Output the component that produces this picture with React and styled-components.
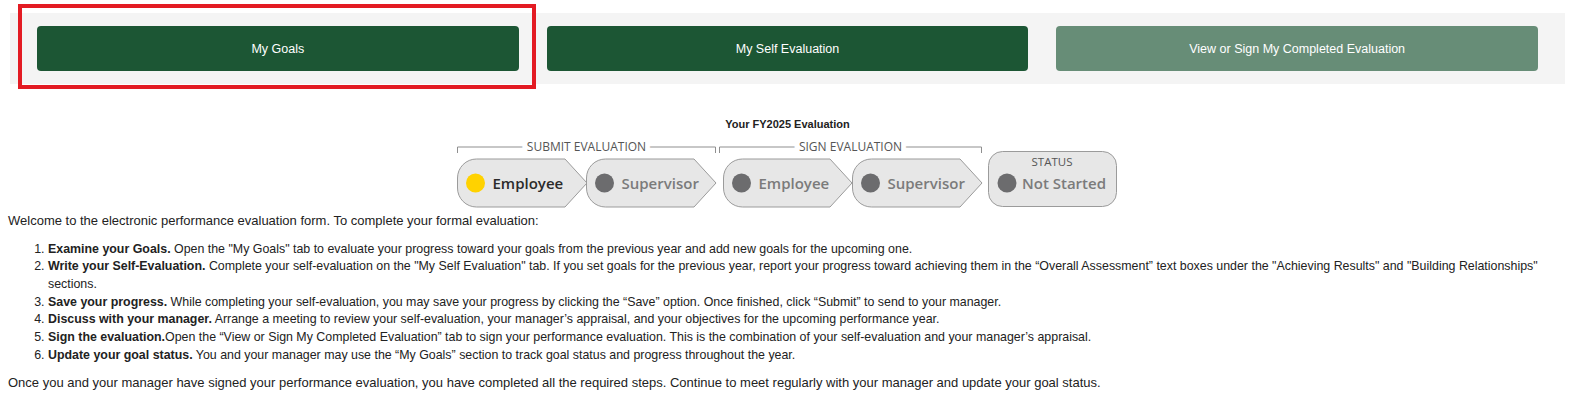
import styled, { createGlobalStyle } from "styled-components";

const GlobalStyle = createGlobalStyle`
  body {
    margin: 0;
    background: #fff;
    font-family: "Liberation Sans", Arial, sans-serif;
    color: #222;
  }
`;

const tabs = [
  { label: "My Goals" },
  { label: "My Self Evaluation" },
  { label: "View or Sign My Completed Evaluation", muted: true },
];

const steps = [
  {
    title: "Examine your Goals.",
    text: ' Open the "My Goals" tab to evaluate your progress toward your goals from the previous year and add new goals for the upcoming one.',
  },
  {
    title: "Write your Self-Evaluation.",
    text: ' Complete your self-evaluation on the "My Self Evaluation" tab. If you set goals for the previous year, report your progress toward achieving them in the \u201cOverall Assessment\u201d text boxes under the "Achieving Results" and "Building Relationships" sections.',
  },
  {
    title: "Save your progress.",
    text: " While completing your self-evaluation, you may save your progress by clicking the \u201cSave\u201d option. Once finished, click \u201cSubmit\u201d to send to your manager.",
  },
  {
    title: "Discuss with your manager.",
    text: " Arrange a meeting to review your self-evaluation, your manager\u2019s appraisal, and your objectives for the upcoming performance year.",
  },
  {
    title: "Sign the evaluation.",
    text: "Open the \u201cView or Sign My Completed Evaluation\u201d tab to sign your performance evaluation. This is the combination of your self-evaluation and your manager\u2019s appraisal.",
  },
  {
    title: "Update your goal status.",
    text: " You and your manager may use the \u201cMy Goals\u201d section to track goal status and progress throughout the year.",
  },
];

// chevron pill: rounded left side, arrow on the right
function pillPath(left, tip) {
  const top = 21;
  const bottom = 69;
  const r = 19;
  return `M${left + r},${top} H${tip - 22} L${tip},45 L${tip - 22},${bottom} H${left + r} A${r} ${r} 0 0 1 ${left},${bottom - r} V${top + r} A${r} ${r} 0 0 1 ${left + r},${top} Z`;
}

function Step({ left, tip, label, active }) {
  return (
    <g>
      <path d={pillPath(left, tip)} fill="#e7e7e7" stroke="#9b9b9b" strokeWidth="1" />
      <circle cx={left + 18} cy="45" r="9.5" fill={active ? "#ffd200" : "#6c6c6e"} />
      <text
        x={left + 35}
        y="50.5"
        fontSize="15"
        fontWeight="600"
        fill={active ? "#2b2b2b" : "#7b7b7b"}
      >
        {label}
      </text>
    </g>
  );
}

function Bracket({ x1, x2, label }) {
  return (
    <g>
      <path d={`M${x1},15 V9 H${x2} V15`} fill="none" stroke="#8f8f8f" strokeWidth="1" />
      <text
        x={(x1 + x2) / 2}
        y="13.2"
        textAnchor="middle"
        fontSize="12"
        fill="#555"
        stroke="#fff"
        strokeWidth="10"
        paintOrder="stroke"
      >
        {label}
      </text>
    </g>
  );
}

function App() {
  return (
    <Page>
      <GlobalStyle />
      <TabPanel>
        {tabs.map((t) => (
          <TabButton key={t.label} $muted={t.muted}>
            {t.label}
          </TabButton>
        ))}
      </TabPanel>
      <Highlight />

      <Title>Your FY2025 Evaluation</Title>
      <Diagram>
        <svg width="670" height="72" viewBox="0 0 670 72">
          <g fontFamily="'Open Sans', sans-serif">
            <Bracket x1={5.5} x2={263.5} label="SUBMIT EVALUATION" />
            <Bracket x1={267.5} x2={529.5} label="SIGN EVALUATION" />
            <Step left={5.5} tip={135} label="Employee" active />
            <Step left={134.5} tip={264} label="Supervisor" />
            <Step left={271.5} tip={400} label="Employee" />
            <Step left={400.5} tip={530} label="Supervisor" />
            <rect x="536.5" y="13.5" width="128" height="55" rx="14" fill="#e7e7e7" stroke="#9b9b9b" />
            <text x="600" y="28" textAnchor="middle" fontSize="11.5" fill="#555">
              STATUS
            </text>
            <circle cx="555" cy="45" r="9.5" fill="#6c6c6e" />
            <text x="570" y="50.5" fontSize="15" fontWeight="600" fill="#7b7b7b">
              Not Started
            </text>
          </g>
        </svg>
      </Diagram>

      <Intro>
        Welcome to the electronic performance evaluation form. To complete your formal evaluation:
      </Intro>
      <Steps>
        {steps.map((s) => (
          <li key={s.title}>
            <b>{s.title}</b>
            {s.text}
          </li>
        ))}
      </Steps>
      <Closing>
        Once you and your manager have signed your performance evaluation, you have completed all the required steps. Continue to meet regularly with your manager and update your goal status.
      </Closing>
    </Page>
  );
}

export default App;

const Page = styled.div`
  position: relative;
  padding: 13px 11px 0 10px;
  font-size: 13px;
`;

const TabPanel = styled.div`
  display: grid;
  grid-template-columns: repeat(3, 1fr);
  gap: 28px;
  padding: 13px 27px;
  background: #f4f4f4;
`;

const TabButton = styled.button`
  height: 45px;
  border: none;
  border-radius: 4px;
  background: ${(p) => (p.$muted ? "#678d77" : "#1c5634")};
  color: #fff;
  font-family: "Liberation Sans", Arial, sans-serif;
  font-size: 12.5px;
  cursor: pointer;
`;

const Highlight = styled.div`
  position: absolute;
  left: 18px;
  top: 4px;
  width: 518px;
  height: 85px;
  box-sizing: border-box;
  border: 4px solid #e31b23;
  pointer-events: none;
`;

const Title = styled.div`
  margin-top: 33px;
  text-align: center;
  font-size: 11px;
  font-weight: bold;
  line-height: 14px;
  color: #222;
`;

const Diagram = styled.div`
  display: flex;
  justify-content: center;
  margin-top: 7px;
  padding-right: 1px;

  svg {
    display: block;
  }
`;

const Intro = styled.p`
  margin: 1.5px 0 0 -2px;
  line-height: 17.5px;
`;

const Steps = styled.ol`
  margin: 11.5px -8px 0 -2px;
  padding-left: 40px;
  font-size: 12.4px;
  line-height: 17.7px;

  b {
    font-weight: bold;
  }
`;

const Closing = styled.p`
  margin: 10px 0 0 -2px;
  line-height: 17.5px;
`;
